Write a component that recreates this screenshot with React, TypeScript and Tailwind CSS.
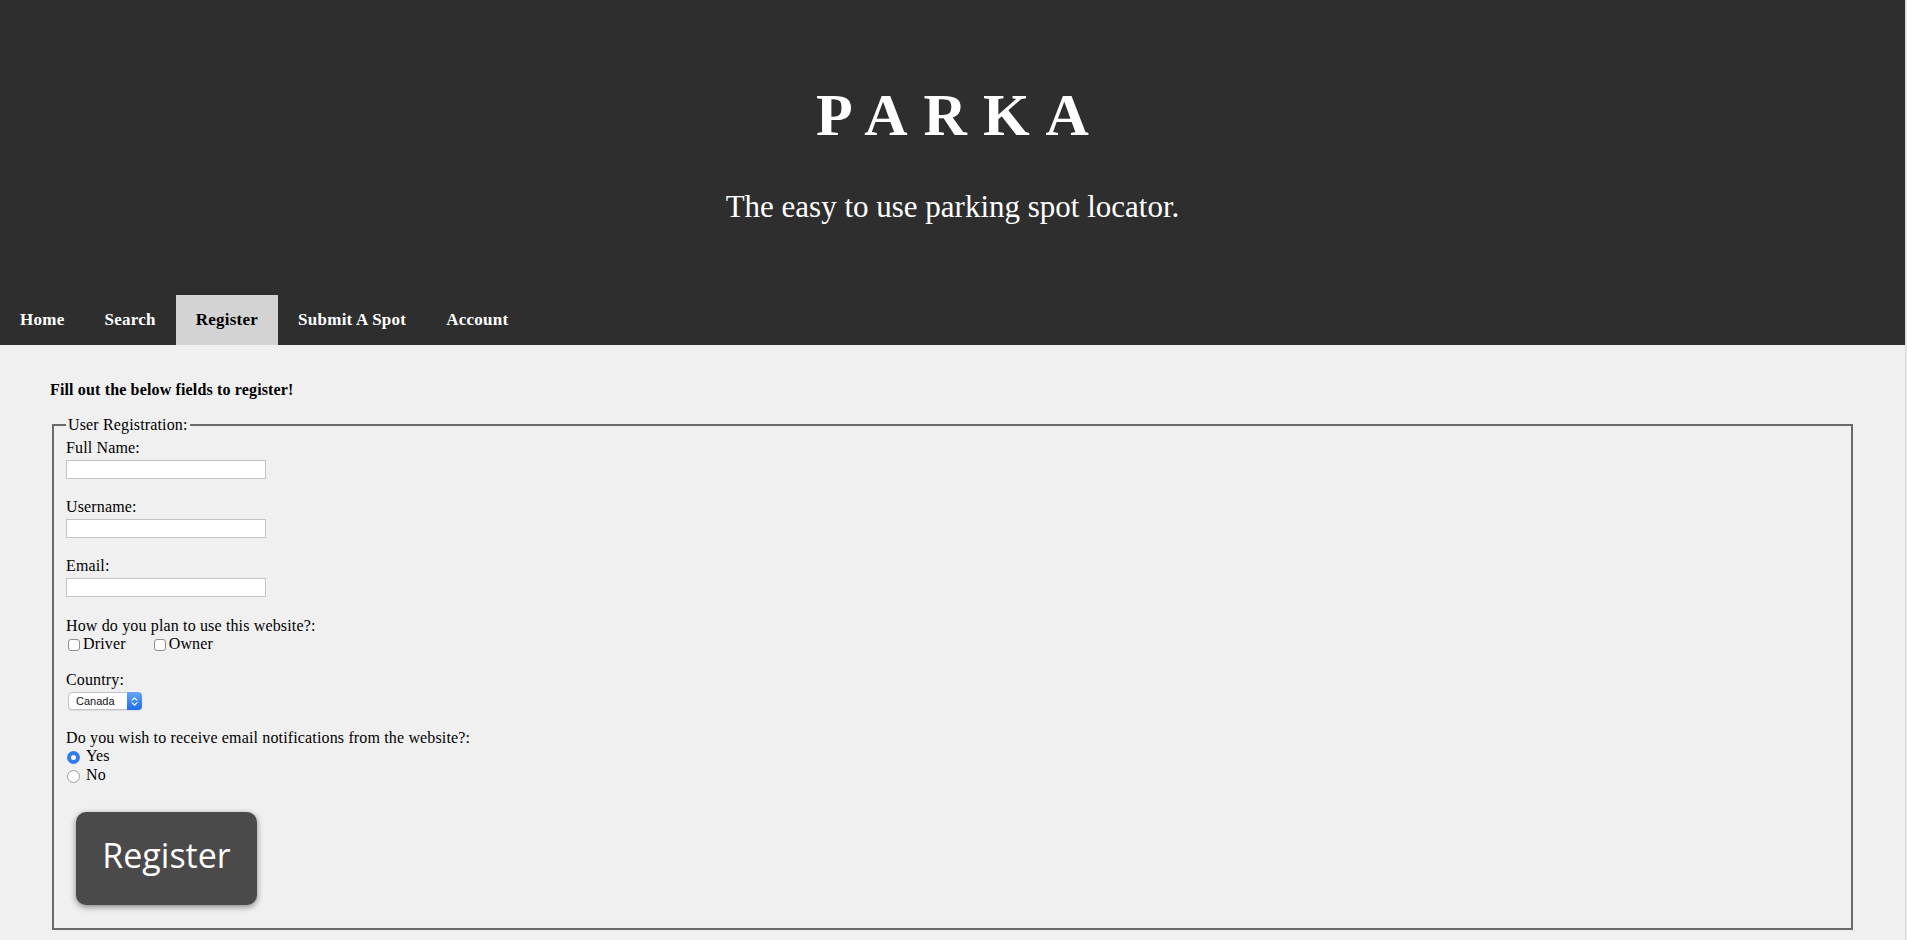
import React from "react";

function NavItem({ label, active }: { label: string; active?: boolean }) {
  return (
    <a
      href="#"
      className={
        active
          ? "block bg-[#d3d3d3] px-[20px] text-[17px] font-bold leading-[50px] tracking-[0.25px] text-black"
          : "block px-[20px] text-[17px] font-bold leading-[50px] tracking-[0.25px] text-white"
      }
    >
      {label}
    </a>
  );
}

function TextField({ label, first }: { label: string; first?: boolean }) {
  return (
    <div className={first ? "mt-[5px]" : "mt-[19px]"}>
      <label className="block">{label}</label>
      <input
        type="text"
        className="mt-[3px] block h-[19px] w-[200px] border border-[#c4c4c4] bg-white px-1 text-[13px] outline-none"
      />
    </div>
  );
}

export default function App() {
  return (
    <div className="flex min-h-screen bg-[#f0f0f0] font-['Liberation_Serif',serif] text-black">
      <div className="w-[1905px] shrink-0">
        <header className="bg-[#2e2e2e] text-white">
          <div className="flex h-[295px] flex-col items-center">
            <h1 className="pl-[16px] pt-[85px] text-[60px] font-bold leading-[60px] tracking-[16px]">
              PARKA
            </h1>
            <p className="mt-[46px] text-[31px] leading-[31px]">
              The easy to use parking spot locator.
            </p>
          </div>
          <nav className="flex h-[50px]">
            <NavItem label="Home" />
            <NavItem label="Search" />
            <NavItem label="Register" active />
            <NavItem label="Submit A Spot" />
            <NavItem label="Account" />
          </nav>
        </header>

        <main className="pt-[36px]">
          <p className="ml-[50px] text-[16px] font-bold leading-[18px] tracking-[0.15px]">
            Fill out the below fields to register!
          </p>

          <fieldset className="ml-[52px] mt-[17px] w-[1801px] border-2 border-[#6b6b6b] px-[12px] pb-[23px] text-[16px] leading-[18px] tracking-[0.15px]">
            <legend className="px-[2px] text-[16px] leading-[18px]">User Registration:</legend>

            <TextField label="Full Name:" first />
            <TextField label="Username:" />
            <TextField label="Email:" />

            <div className="mt-[20px]">How do you plan to use this website?:</div>
            <div className="flex h-[18px]">
              <input
                type="checkbox"
                className="ml-[2px] mt-[4px] h-[12px] w-[12px] appearance-none rounded-[3px] border border-[#8f8f8f] bg-white"
              />
              <span className="ml-[3px]">Driver</span>
              <input
                type="checkbox"
                className="ml-[28px] mt-[4px] h-[12px] w-[12px] appearance-none rounded-[3px] border border-[#8f8f8f] bg-white"
              />
              <span className="ml-[3px]">Owner</span>
            </div>

            <div className="mt-[18px]">Country:</div>
            <div className="ml-[2px] mt-[3px] flex h-[18px] w-[74px] rounded-[4px] border border-[#c3c3c3] bg-white tracking-normal shadow-[0_1px_1px_rgba(0,0,0,0.08)]">
              <span className="flex-1 pl-[7px] font-['Liberation_Sans',sans-serif] text-[11px] leading-[16px] text-[#111]">
                Canada
              </span>
              <span className="-my-px -mr-px flex w-[15px] items-center justify-center rounded-r-[4px] bg-linear-to-b from-[#63a6fb] to-[#1e6cf1]">
                <svg width="7" height="11" viewBox="0 0 7 11" fill="none">
                  <path d="M1.2 4.2 L3.5 1.8 L5.8 4.2" stroke="white" strokeWidth="1.2" strokeLinecap="round" strokeLinejoin="round" />
                  <path d="M1.2 6.8 L3.5 9.2 L5.8 6.8" stroke="white" strokeWidth="1.2" strokeLinecap="round" strokeLinejoin="round" />
                </svg>
              </span>
            </div>

            <div className="mt-[19px]">Do you wish to receive email notifications from the website?:</div>
            <div className="flex h-[19px]">
              <input
                type="radio"
                name="notify"
                defaultChecked
                className="ml-[1px] mt-[4px] h-[13px] w-[13px] appearance-none rounded-full bg-white shadow-[inset_0_0_0_4px_#2f7bf5]"
              />
              <span className="ml-[6px]">Yes</span>
            </div>
            <div className="flex h-[19px]">
              <input
                type="radio"
                name="notify"
                className="ml-[1px] mt-[4px] h-[13px] w-[13px] appearance-none rounded-full border border-[#9a9a9a] bg-white"
              />
              <span className="ml-[6px]">No</span>
            </div>

            <button
              type="button"
              className="ml-[10px] mt-[27px] flex h-[93px] w-[181px] items-center justify-center rounded-[10px] bg-[#4a4a4a] pb-[8px] font-['Open_Sans',sans-serif] text-[34px] leading-[34px] tracking-normal text-white shadow-[0_2px_6px_rgba(0,0,0,0.45)]"
            >
              Register
            </button>
          </fieldset>
        </main>
      </div>
      <div className="flex-1 border-l border-[#dadada] bg-[#e9e9e9]" />
    </div>
  );
}
